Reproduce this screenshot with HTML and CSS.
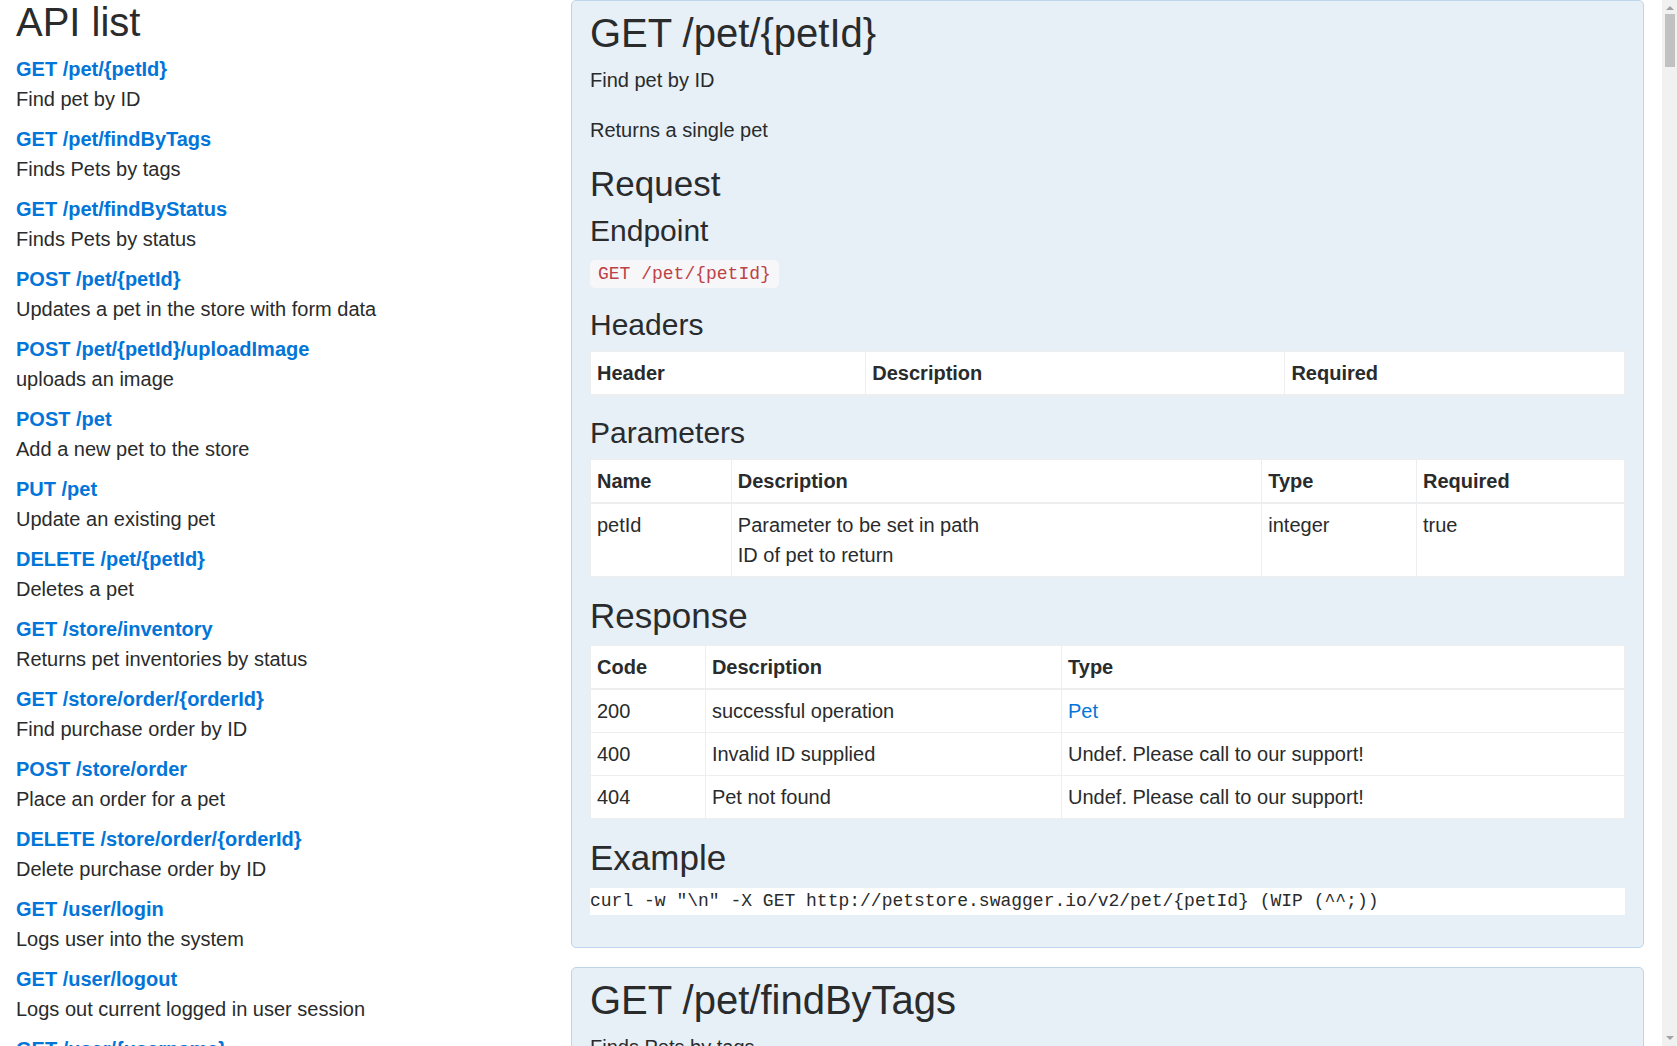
FILE: index.html
```html
<!DOCTYPE html>
<html lang="en">
<head>
<meta charset="utf-8">
<title>API list</title>
<link rel="stylesheet" href="styles.css">
</head>
<body>
<div class="page">
  <nav class="sidebar">
    <h2 class="sidebar-title">API list</h2>
    <ul class="api-list">
      <li class="api-item"><a class="api-link" href="#get-pet-petid">GET /pet/{petId}</a><span class="api-summary">Find pet by ID</span></li>
      <li class="api-item"><a class="api-link" href="#get-pet-findbytags">GET /pet/findByTags</a><span class="api-summary">Finds Pets by tags</span></li>
      <li class="api-item"><a class="api-link" href="#">GET /pet/findByStatus</a><span class="api-summary">Finds Pets by status</span></li>
      <li class="api-item"><a class="api-link" href="#">POST /pet/{petId}</a><span class="api-summary">Updates a pet in the store with form data</span></li>
      <li class="api-item"><a class="api-link" href="#">POST /pet/{petId}/uploadImage</a><span class="api-summary">uploads an image</span></li>
      <li class="api-item"><a class="api-link" href="#">POST /pet</a><span class="api-summary">Add a new pet to the store</span></li>
      <li class="api-item"><a class="api-link" href="#">PUT /pet</a><span class="api-summary">Update an existing pet</span></li>
      <li class="api-item"><a class="api-link" href="#">DELETE /pet/{petId}</a><span class="api-summary">Deletes a pet</span></li>
      <li class="api-item"><a class="api-link" href="#">GET /store/inventory</a><span class="api-summary">Returns pet inventories by status</span></li>
      <li class="api-item"><a class="api-link" href="#">GET /store/order/{orderId}</a><span class="api-summary">Find purchase order by ID</span></li>
      <li class="api-item"><a class="api-link" href="#">POST /store/order</a><span class="api-summary">Place an order for a pet</span></li>
      <li class="api-item"><a class="api-link" href="#">DELETE /store/order/{orderId}</a><span class="api-summary">Delete purchase order by ID</span></li>
      <li class="api-item"><a class="api-link" href="#">GET /user/login</a><span class="api-summary">Logs user into the system</span></li>
      <li class="api-item"><a class="api-link" href="#">GET /user/logout</a><span class="api-summary">Logs out current logged in user session</span></li>
      <li class="api-item"><a class="api-link" href="#">GET /user/{username}</a><span class="api-summary">Get user by user name</span></li>
      <li class="api-item"><a class="api-link" href="#">PUT /user/{username}</a><span class="api-summary">Updated user</span></li>
      <li class="api-item"><a class="api-link" href="#">DELETE /user/{username}</a><span class="api-summary">Delete user</span></li>
      <li class="api-item"><a class="api-link" href="#">POST /user</a><span class="api-summary">Create user</span></li>
      <li class="api-item"><a class="api-link" href="#">POST /user/createWithArray</a><span class="api-summary">Creates list of users with given input array</span></li>
      <li class="api-item"><a class="api-link" href="#">POST /user/createWithList</a><span class="api-summary">Creates list of users with given input array</span></li>
    </ul>
  </nav>

  <main class="content">
    <section class="card" id="get-pet-petid">
      <h2 class="card-title">GET /pet/{petId}</h2>
      <p class="text">Find pet by ID</p>
      <p class="text">Returns a single pet</p>
      <h3 class="section-title">Request</h3>
      <h4 class="sub-title">Endpoint</h4>
      <p class="text"><code class="endpoint">GET /pet/{petId}</code></p>
      <h4 class="sub-title">Headers</h4>
      <table class="api-table">
        <thead>
          <tr><th>Header</th><th>Description</th><th>Required</th></tr>
        </thead>
        <tbody></tbody>
      </table>
      <h4 class="sub-title">Parameters</h4>
      <table class="api-table">
        <thead>
          <tr><th>Name</th><th>Description</th><th>Type</th><th>Required</th></tr>
        </thead>
        <tbody>
          <tr><td>petId</td><td>Parameter to be set in path<br>ID of pet to return</td><td>integer</td><td>true</td></tr>
        </tbody>
      </table>
      <h3 class="section-title">Response</h3>
      <table class="api-table">
        <thead>
          <tr><th>Code</th><th>Description</th><th>Type</th></tr>
        </thead>
        <tbody>
          <tr><td>200</td><td>successful operation</td><td><a class="type-link" href="#">Pet</a></td></tr>
          <tr><td>400</td><td>Invalid ID supplied</td><td>Undef. Please call to our support!</td></tr>
          <tr><td>404</td><td>Pet not found</td><td>Undef. Please call to our support!</td></tr>
        </tbody>
      </table>
      <h3 class="section-title">Example</h3>
      <pre class="example">curl -w "\n" -X GET http://petstore.swagger.io/v2/pet/{petId} (WIP (^^;))</pre>
    </section>

    <section class="card" id="get-pet-findbytags">
      <h2 class="card-title">GET /pet/findByTags</h2>
      <p class="text">Finds Pets by tags</p>
      <p class="text">Multiple tags can be provided with comma separated strings. Use tag1, tag2, tag3 for testing.</p>
      <h3 class="section-title">Request</h3>
      <h4 class="sub-title">Endpoint</h4>
      <p class="text"><code class="endpoint">GET /pet/findByTags</code></p>
    </section>
  </main>
</div>

<div class="scrollbar" aria-hidden="true">
  <span class="scroll-arrow scroll-up"></span>
  <span class="scroll-thumb"></span>
  <span class="scroll-arrow scroll-down"></span>
</div>
</body>
</html>
```

FILE: styles.css
```css
html {
  font-size: 20px;
}

body {
  margin: 0;
  font-family: "Liberation Sans", Arial, Helvetica, sans-serif;
  font-size: 1rem;
  line-height: 1.5;
  color: #292b2c;
  background: #fff;
}

.page {
  display: grid;
  grid-template-columns: 571px 1073px;
  align-items: start;
}

.sidebar {
  padding-left: 16px;
}

.sidebar-title,
.card-title {
  margin: 0 0 10px;
  font-size: 40px;
  font-weight: 500;
  line-height: 1.1;
}

.section-title {
  margin: 0 0 10px;
  font-size: 35px;
  font-weight: 500;
  line-height: 1.1;
}

.sub-title {
  margin: 0 0 10px;
  font-size: 30px;
  font-weight: 500;
  line-height: 1.1;
}

.api-list {
  list-style: none;
  margin: 0;
  padding: 0;
}

.api-item {
  margin-bottom: 10px;
}

.api-link {
  display: block;
  font-weight: bold;
  color: #0275d8;
  text-decoration: none;
}

.api-summary {
  display: block;
}

.card {
  background: #e7eff7;
  border: 1px solid #bed5ec;
  border-radius: 5px;
  padding: 10px 18px 12px;
  margin-bottom: 19px;
}

.text {
  margin: 0 0 20px;
}

.endpoint {
  font-family: "Liberation Mono", "DejaVu Sans Mono", monospace;
  font-size: 18px;
  padding: 4px 8px;
  color: #bd4147;
  background: #f7f7f9;
  border-radius: 5px;
}

.api-table {
  width: 100%;
  border-collapse: collapse;
  background: #fff;
  margin-bottom: 20px;
}

.api-table th,
.api-table td {
  padding: 6px;
  border: 1px solid #eceeef;
  text-align: left;
  vertical-align: top;
}

.api-table thead th {
  vertical-align: bottom;
  border-bottom-width: 2px;
  font-weight: bold;
}

.type-link {
  color: #0275d8;
  text-decoration: none;
}

.example {
  margin: 0 0 20px;
  padding: 0;
  font-family: "Liberation Mono", "DejaVu Sans Mono", monospace;
  font-size: 18px;
  line-height: 1.5;
  background: #fff;
  color: #292b2c;
  overflow: auto;
}

/* imitation of the browser's classic scrollbar */
.scrollbar {
  position: fixed;
  top: 0;
  right: 0;
  width: 15px;
  height: 100vh;
  background: #f1f1f1;
  display: flex;
  flex-direction: column;
  align-items: center;
}

.scroll-arrow {
  width: 0;
  height: 0;
  border-left: 4px solid transparent;
  border-right: 4px solid transparent;
}

.scroll-up {
  margin-top: 6px;
  border-bottom: 4px solid #a3a3a3;
}

.scroll-down {
  margin-top: auto;
  margin-bottom: 6px;
  border-top: 4px solid #a3a3a3;
}

.scroll-thumb {
  margin-top: 4px;
  width: 10px;
  height: 53px;
  background: #c1c1c1;
}
```
